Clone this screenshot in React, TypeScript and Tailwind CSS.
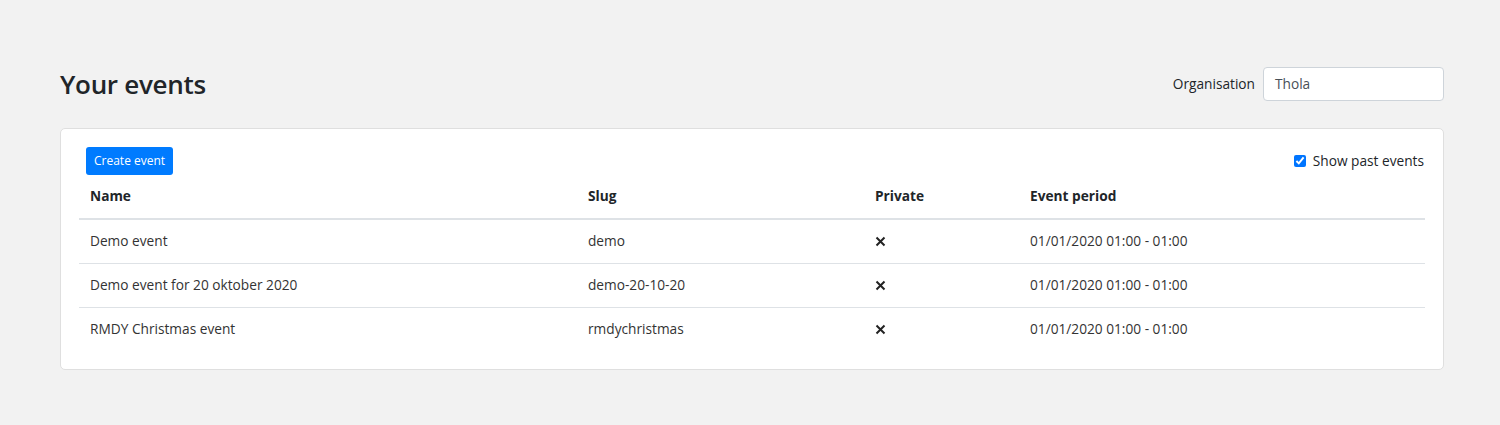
import React from "react";

const rows = [
  { name: "Demo event", slug: "demo" },
  { name: "Demo event for 20 oktober 2020", slug: "demo-20-10-20" },
  { name: "RMDY Christmas event", slug: "rmdychristmas" },
];

export default function App() {
  return (
    <div
      className="min-h-[425px] w-full bg-[#f2f2f2] text-[#212529]"
      style={{ fontFamily: '"Open Sans", "Noto Sans", sans-serif' }}
    >
      <div className="px-[60px] pt-[67px] pr-[56px]">
        <div className="flex items-center justify-between">
          <h1 className="text-[26px] leading-[34px] font-semibold tracking-[-0.3px] text-[#212529]">Your events</h1>
          <div className="flex items-center gap-[8px]">
            <span className="text-[13.7px] text-[#212529]">Organisation</span>
            <div className="flex h-[34px] w-[181px] items-center rounded-[4px] border border-[#ced4da] bg-white px-[11px] text-[13.7px] text-[#495057]">
              Thola
            </div>
          </div>
        </div>
        <div className="mt-[27px] rounded-[5px] border border-[#dfdfdf] bg-white px-[18px] pt-[18px] pb-[18px]">
          <div className="flex items-center justify-between">
            <button className="ml-[7px] h-[28px] rounded-[3px] bg-[#007bff] px-[8px] text-[12px] text-white">
              Create event
            </button>
            <label className="mr-[1px] flex items-center gap-[7px] text-[13.7px]">
              <input type="checkbox" defaultChecked className="h-[12px] w-[12px] accent-[#0075ff]" />
              Show past events
            </label>
          </div>
          <table className="w-full text-[13.7px]">
            <thead>
              <tr className="border-b-2 border-[#dee2e6]">
                <th className="h-[44px] w-[498px] px-[11px] text-left font-bold">Name</th>
                <th className="w-[287px] px-[11px] text-left font-bold">Slug</th>
                <th className="w-[155px] px-[11px] text-left font-bold">Private</th>
                <th className="px-[11px] text-left font-bold">Event period</th>
              </tr>
            </thead>
            <tbody>
              {rows.map((r, i) => (
                <tr key={r.slug} className={i < rows.length - 1 ? "border-b border-[#dee2e6]" : ""}>
                  <td className="h-[44px] px-[11px] text-[#333]">{r.name}</td>
                  <td className="px-[11px] text-[#333]">{r.slug}</td>
                  <td className="px-[11px]">
                    <svg width="11" height="11" viewBox="0 0 11 11" className="block">
                      <path d="M1.5 1.5 L9.5 9.5 M9.5 1.5 L1.5 9.5" stroke="#222" strokeWidth="2" />
                    </svg>
                  </td>
                  <td className="px-[11px] text-[#333]">01/01/2020 01:00 - 01:00</td>
                </tr>
              ))}
            </tbody>
          </table>
        </div>
      </div>
    </div>
  );
}
